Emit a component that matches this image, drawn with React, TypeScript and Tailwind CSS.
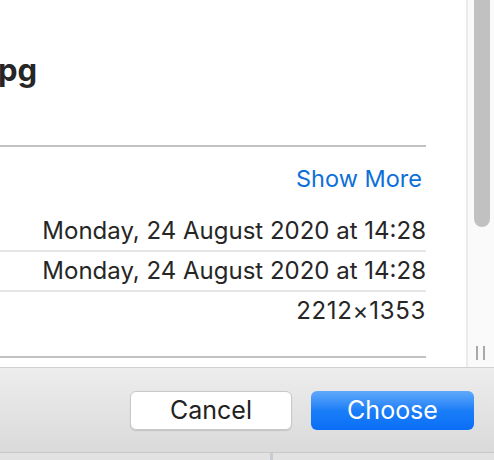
import React from "react";

export default function App() {
  const font = { fontFamily: "Inter, 'Noto Sans', 'Liberation Sans', sans-serif" };
  return (
    <div className="w-[494px] h-[460px] overflow-hidden flex flex-col bg-white text-[#262626]" style={font}>
      <div className="h-[367px] flex flex-row shrink-0">
        <div className="flex-1 bg-white overflow-hidden pr-[40px]">
          <div className="h-[145px] pt-[52px]">
            <div className="text-[31px] leading-[36px] font-bold -ml-[2px]">pg</div>
          </div>
          <div className="h-[2px] bg-[#c2c2c2]" />
          <div className="pt-[12px] pb-[12px] pr-[4px] h-[64px] text-right text-[23.5px] leading-[40px] text-[#0d6fd8]">
            Show More
          </div>
          <div className="h-[39px] text-right text-[24px] leading-[39px]">Monday, 24 August 2020 at 14:28</div>
          <div className="h-[2px] bg-[#e6e6e6]" />
          <div className="h-[38px] text-right text-[24px] leading-[38px]">Monday, 24 August 2020 at 14:28</div>
          <div className="h-[2px] bg-[#e6e6e6]" />
          <div className="h-[38px] text-right text-[24px] leading-[38px] tracking-[0.7px]">2212×1353</div>
          <div className="h-[26px]" />
          <div className="h-[2px] bg-[#c2c2c2]" />
        </div>
        <div className="w-[28px] relative bg-[#fafafa] border-l-2 border-[#ebebeb]">
          <div className="absolute left-[6px] top-0 w-[16px] h-[227px] bg-[#c1c1c1] rounded-b-[8px]" />
          <div className="absolute left-[8px] top-[346px] w-[2px] h-[14px] bg-[#a9a9a9]" />
          <div className="absolute left-[15px] top-[346px] w-[2px] h-[14px] bg-[#a9a9a9]" />
        </div>
      </div>
      <div className="h-[85px] shrink-0 border-t border-[#d1d1d1] bg-gradient-to-b from-[#ededed] to-[#dadada] flex flex-row items-center justify-end pr-[20px] gap-[19px]">
        <div className="w-[162px] h-[39px] rounded-[6px] bg-white border border-[#c8c8c8] shadow-[0_1px_1px_rgba(0,0,0,0.12)] flex items-center justify-center text-[25px] text-[#222] pt-[2px]">
          Cancel
        </div>
        <div className="w-[163px] h-[39px] rounded-[6px] bg-gradient-to-b from-[#5fa9fa] via-[#1a7ef8] to-[#0a6ef6] flex items-center justify-center text-[25px] text-white pt-[2px]">
          Choose
        </div>
      </div>
      <div className="flex-1 border-t border-[#c9c9c9] bg-[#e2e2e2] flex flex-row">
        <div className="w-[270px]" />
        <div className="w-[3px] bg-[#c5cad3]" />
      </div>
    </div>
  );
}
